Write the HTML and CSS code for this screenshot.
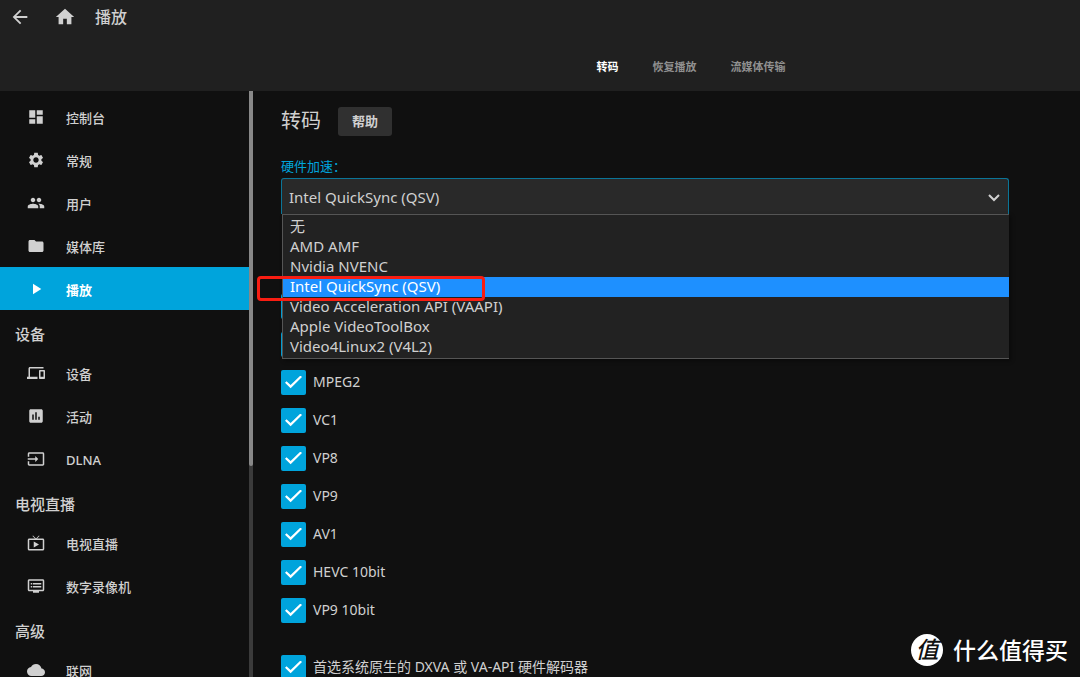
FILE: index.html
```html
<!DOCTYPE html>
<html lang="zh-CN">
<head>
<meta charset="utf-8">
<title>播放</title>
<link rel="stylesheet" href="styles.css">
</head>
<body>
<header class="header">
  <div class="header-bar">
    <button class="icon-button" type="button" aria-label="返回"><svg class="icon-lg" viewBox="0 0 24 24"><path d="M20 11H7.83l5.59-5.59L12 4l-8 8 8 8 1.41-1.41L7.83 13H20v-2z"/></svg></button>
    <button class="icon-button" type="button" aria-label="主页"><svg class="icon-lg" viewBox="0 0 24 24"><path d="M10 20v-6h4v6h5v-8h3L12 3 2 12h3v8z"/></svg></button>
    <h1 class="page-title">播放</h1>
  </div>
  <nav class="tabs">
    <button class="tab tab-active" type="button">转码</button>
    <button class="tab" type="button">恢复播放</button>
    <button class="tab" type="button">流媒体传输</button>
  </nav>
</header>
<div class="body">
  <nav class="sidebar">
    <a class="nav-item" href="#"><svg class="icon" viewBox="0 0 24 24"><path d="M3 13h8V3H3v10zm0 8h8v-6H3v6zm10 0h8V11h-8v10zm0-18v6h8V3h-8z"/></svg><span>控制台</span></a>
    <a class="nav-item" href="#"><svg class="icon" viewBox="0 0 24 24"><path d="M19.14 12.94c.04-.3.06-.61.06-.94 0-.32-.02-.64-.07-.94l2.03-1.58c.18-.14.23-.41.12-.61l-1.92-3.32c-.12-.22-.37-.29-.59-.22l-2.39.96c-.5-.38-1.03-.7-1.62-.94l-.36-2.54c-.04-.24-.24-.41-.48-.41h-3.84c-.24 0-.43.17-.47.41l-.36 2.54c-.59.24-1.13.57-1.62.94l-2.39-.96c-.22-.08-.47 0-.59.22L2.74 8.87c-.12.21-.08.47.12.61l2.03 1.58c-.05.3-.09.63-.09.94s.02.64.07.94l-2.03 1.58c-.18.14-.23.41-.12.61l1.92 3.32c.12.22.37.29.59.22l2.39-.96c.5.38 1.03.7 1.62.94l.36 2.54c.05.24.24.41.48.41h3.84c.24 0 .44-.17.47-.41l.36-2.54c.59-.24 1.13-.56 1.62-.94l2.39.96c.22.08.47 0 .59-.22l1.92-3.32c.12-.22.07-.47-.12-.61l-2.01-1.58zM12 15.6c-1.98 0-3.6-1.62-3.6-3.6s1.62-3.6 3.6-3.6 3.6 1.62 3.6 3.6-1.62 3.6-3.6 3.6z"/></svg><span>常规</span></a>
    <a class="nav-item" href="#"><svg class="icon" viewBox="0 0 24 24"><path d="M16 11c1.66 0 2.99-1.34 2.99-3S17.66 5 16 5s-3 1.34-3 3 1.34 3 3 3zm-8 0c1.66 0 2.99-1.34 2.99-3S9.66 5 8 5 5 6.34 5 8s1.34 3 3 3zm0 2c-2.33 0-7 1.17-7 3.5V19h14v-2.5c0-2.33-4.67-3.5-7-3.5zm8 0c-.29 0-.62.02-.97.05 1.16.84 1.97 1.97 1.97 3.45V19h6v-2.5c0-2.33-4.67-3.5-7-3.5z"/></svg><span>用户</span></a>
    <a class="nav-item" href="#"><svg class="icon" viewBox="0 0 24 24"><path d="M10 4H4c-1.100 0-1.990.900-1.990 2L2 18c0 1.100.900 2 2 2h16c1.100 0 2-.900 2-2V8c0-1.100-.900-2-2-2h-8l-2-2z"/></svg><span>媒体库</span></a>
    <a class="nav-item nav-item-active" href="#" aria-current="page"><svg class="icon" viewBox="0 0 24 24"><path d="M8 5v14l11-7z"/></svg><span>播放</span></a>
    <h2 class="nav-heading">设备</h2>
    <a class="nav-item" href="#"><svg class="icon" viewBox="0 0 24 24"><path d="M4 6h18V4H4c-1.100 0-2 .900-2 2v11H0v3h14v-3H4V6zm19 2h-6c-.550 0-1 .450-1 1v10c0 .550.450 1 1 1h6c.550 0 1-.450 1-1V9c0-.550-.450-1-1-1zm-1 9h-4v-7h4v7z"/></svg><span>设备</span></a>
    <a class="nav-item" href="#"><svg class="icon" viewBox="0 0 24 24"><path d="M19 3H5c-1.100 0-2 .900-2 2v14c0 1.100.900 2 2 2h14c1.100 0 2-.900 2-2V5c0-1.100-.900-2-2-2zM9 17H7v-7h2v7zm4 0h-2V7h2v10zm4 0h-2v-4h2v4z"/></svg><span>活动</span></a>
    <a class="nav-item" href="#"><svg class="icon" viewBox="0 0 24 24"><path d="M21 3.010H3c-1.100 0-2 .900-2 2V9h2V4.990h18v14.030H3V15H1v4.010c0 1.100.900 1.980 2 1.980h18c1.100 0 2-.880 2-1.980v-14c0-1.110-.900-2-2-2zM11 16l4-4-4-4v3H1v2h10v3z"/></svg><span>DLNA</span></a>
    <h2 class="nav-heading">电视直播</h2>
    <a class="nav-item" href="#"><svg class="icon" viewBox="0 0 24 24"><path d="M21 6h-7.590l3.290-3.290L16 2l-4 4-4-4-.710.710L10.590 6H3c-1.100 0-2 .890-2 2v12c0 1.100.900 2 2 2h18c1.100 0 2-.900 2-2V8c0-1.110-.900-2-2-2zm0 14H3V8h18v12zM9 10v8l7-4z"/></svg><span>电视直播</span></a>
    <a class="nav-item" href="#"><svg class="icon" viewBox="0 0 24 24"><path d="M21 3H3c-1.100 0-2 .900-2 2v12c0 1.100.900 2 2 2h5v2h8v-2h5c1.100 0 1.990-.900 1.990-2L23 5c0-1.100-.900-2-2-2zm0 14H3V5h18v12zm-2-9H8v2h11V8zm0 4H8v2h11v-2zM7 8H5v2h2V8zm0 4H5v2h2v-2z"/></svg><span>数字录像机</span></a>
    <h2 class="nav-heading">高级</h2>
    <a class="nav-item" href="#"><svg class="icon" viewBox="0 0 24 24"><path d="M19.350 10.040C18.670 6.590 15.640 4 12 4 9.110 4 6.600 5.640 5.350 8.040 2.340 8.360 0 10.910 0 14c0 3.310 2.690 6 6 6h13c2.760 0 5-2.240 5-5 0-2.640-2.050-4.780-4.650-4.960z"/></svg><span>联网</span></a>
  </nav>
  <div class="scrollbar"><div class="scrollbar-thumb"></div></div>
  <main class="content">
    <form class="form">
      <div class="section-head">
        <h2 class="section-title">转码</h2>
        <button class="help" type="button">帮助</button>
      </div>
      <label class="field-label" for="hwaccel">硬件加速：</label>
      <div class="select-wrap">
        <select class="select" id="hwaccel">
          <option>无</option>
          <option>AMD AMF</option>
          <option>Nvidia NVENC</option>
          <option selected>Intel QuickSync (QSV)</option>
          <option>Video Acceleration API (VAAPI)</option>
          <option>Apple VideoToolBox</option>
          <option>Video4Linux2 (V4L2)</option>
        </select>
        <svg class="chevron" viewBox="0 0 12 8"><path d="M1 1l5 5 5-5"/></svg>
        <ul class="popup" role="listbox" aria-label="硬件加速">
          <li class="option" role="option">无</li>
          <li class="option" role="option">AMD AMF</li>
          <li class="option" role="option">Nvidia NVENC</li>
          <li class="option option-selected" role="option" aria-selected="true">Intel QuickSync (QSV)<span class="marker"></span></li>
          <li class="option" role="option">Video Acceleration API (VAAPI)</li>
          <li class="option" role="option">Apple VideoToolBox</li>
          <li class="option" role="option">Video4Linux2 (V4L2)</li>
        </ul>
      </div>
      <div class="codecs">
        <div class="check"><input class="box" type="checkbox" checked aria-label="H264"></div>
        <div class="check"><input class="box" type="checkbox" checked aria-label="HEVC"></div>
        <label class="check"><input class="box" type="checkbox" checked><span>MPEG2</span></label>
        <label class="check"><input class="box" type="checkbox" checked><span>VC1</span></label>
        <label class="check"><input class="box" type="checkbox" checked><span>VP8</span></label>
        <label class="check"><input class="box" type="checkbox" checked><span>VP9</span></label>
        <label class="check"><input class="box" type="checkbox" checked><span>AV1</span></label>
        <label class="check"><input class="box" type="checkbox" checked><span>HEVC 10bit</span></label>
        <label class="check"><input class="box" type="checkbox" checked><span>VP9 10bit</span></label>
      </div>
      <label class="check"><input class="box" type="checkbox" checked><span>首选系统原生的 DXVA 或 VA-API 硬件解码器</span></label>
    </form>
  </main>
</div>
<div class="watermark"><span class="watermark-logo">值</span><span>什么值得买</span></div>
</body>
</html>
```
FILE: styles.css
```css
* { box-sizing: border-box; }

body {
  margin: 0;
  height: 100vh;
  display: flex;
  flex-direction: column;
  overflow: hidden;
  background: #101010;
  color: #d0d0d0;
  font: 14px/20px "Noto Sans", "Noto Sans CJK SC", sans-serif;
}

button, select { font: inherit; color: inherit; }
h1, h2, ul { margin: 0; padding: 0; }
svg { fill: currentColor; flex: none; }

.header { flex: none; background: #202020; }
.header-bar { display: flex; align-items: center; gap: 23px; height: 34px; padding-left: 9px; }
.icon-button { display: flex; padding: 0; border: 0; background: none; }
.icon-lg { width: 22px; height: 22px; }
.page-title { font-size: 16px; font-weight: 500; margin-left: -4px; }

.tabs { display: flex; justify-content: center; height: 57px; padding: 8px 0 0 302px; align-items: center; }
.tab { border: 0; background: none; padding: 8px 17px; font-size: 11px; font-weight: 700; color: #909090; }
.tab-active { color: #fff; }

.body { flex: 1; min-height: 0; display: flex; }
.sidebar { flex: none; width: 249px; padding-top: 4px; overflow: hidden; }
.nav-item {
  display: flex;
  align-items: center;
  gap: 21px;
  height: 43px;
  padding-left: 27px;
  color: #d0d0d0;
  font-size: 13px;
  font-weight: 500;
  text-decoration: none;
}
.nav-item span { padding-top: 3px; }
.nav-item-active { background: #00a4dc; color: #fff; font-weight: 700; }
.nav-heading { height: 41px; padding: 14px 0 0 15px; font-size: 15px; font-weight: 500; }
.icon { width: 18px; height: 18px; }

.scrollbar { flex: none; width: 4px; background: #3b3b3b; }
.scrollbar-thumb { height: 64%; background: #888; border-radius: 0 0 2px 2px; }

.content { flex: 1; min-width: 0; padding: 15px 71px 0 28px; }
.section-head { display: flex; align-items: center; gap: 17px; }
.section-title { font-size: 20px; font-weight: 400; line-height: 30px; }
.help { height: 29px; padding: 0 14px; border: 0; border-radius: 3px; background: #303030; font-size: 13px; font-weight: 700; }
.field-label { display: block; margin: 20px 0 2px; font-size: 13px; color: #00a4dc; }

.select-wrap { position: relative; }
.select {
  display: block;
  width: 100%;
  height: 36px;
  padding: 0 7px;
  appearance: none;
  border: 1px solid #0b7598;
  border-bottom: 0;
  border-radius: 3px 3px 0 0;
  background: #292929;
  font-size: 15px;
  outline: 0;
}
.chevron { position: absolute; right: 9px; top: 16px; width: 12px; height: 8px; fill: none; stroke: #d0d0d0; stroke-width: 2; }
.popup {
  position: absolute;
  z-index: 1;
  top: 100%;
  left: 1px;
  right: 0;
  padding: 2px 0 1px;
  border: 1px solid #555;
  border-width: 1px 0 1px 1px;
  background: #222;
  box-shadow: 2px 2px 4px #0006;
  list-style: none;
  font-size: 15px;
}
.option { position: relative; height: 20px; padding-left: 7px; line-height: 19px; }
.option-selected { background: #1e90ff; color: #fff; }
.marker { position: absolute; left: -26px; top: -1px; width: 228px; height: 25px; border: 3px solid #f91d12; border-radius: 4px; }

.codecs { padding-top: 73px; margin-bottom: 19px; }
.check { display: flex; align-items: center; gap: 7px; height: 38px; }
.box {
  appearance: none;
  flex: none;
  display: grid;
  place-items: center;
  width: 25px;
  height: 25px;
  margin: 0;
  border-radius: 2px;
  background: #00a4dc;
}
.box::before {
  content: "";
  width: 17px;
  height: 13px;
  background: #fff;
  clip-path: polygon(0 56%, 9% 45%, 33% 74%, 91% 0, 100% 11%, 33% 98%);
}

.watermark { position: absolute; right: 12px; bottom: 10px; display: flex; align-items: center; gap: 10px; color: #fff; font-size: 23px; line-height: 34px; font-weight: 500; }
.watermark-logo { width: 32px; height: 32px; border-radius: 50%; background: #fff; color: #101010; line-height: 30px; text-align: center; font-style: italic; }
```
